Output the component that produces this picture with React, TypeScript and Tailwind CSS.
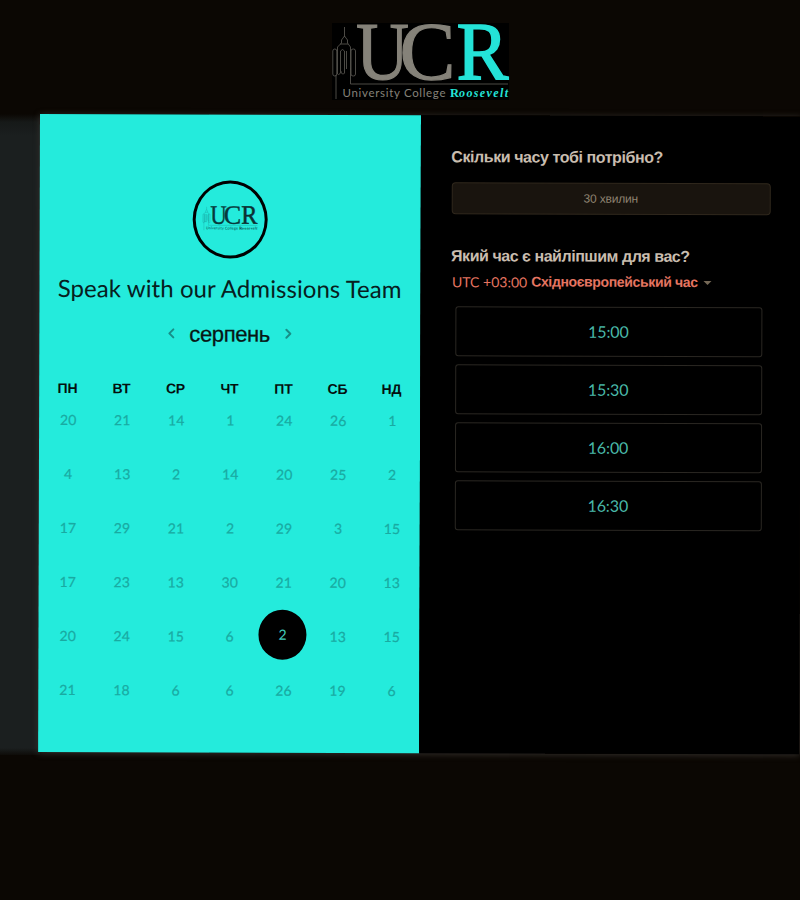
import { ChevronLeft, ChevronRight } from "lucide-react";

const weekdays = ["ПН", "ВТ", "СР", "ЧТ", "ПТ", "СБ", "НД"];
const weeks = [
  [20, 21, 14, 1, 24, 26, 1],
  [4, 13, 2, 14, 20, 25, 2],
  [17, 29, 21, 2, 29, 3, 15],
  [17, 23, 13, 30, 21, 20, 13],
  [20, 24, 15, 6, 2, 13, 15],
  [21, 18, 6, 6, 26, 19, 6],
];
const slots = ["15:00", "15:30", "16:00", "16:30"];

type LogoProps = { className: string; main: string; accent: string; line: string };

function Logo({ className, main, accent, line }: LogoProps) {
  return (
    <svg viewBox="0 0 177 77" preserveAspectRatio="none" className={className}>
      <g fill="none" stroke={line} strokeWidth="0.9">
        <path d="M12.5 4v10M12.5 13l-3 4v3l-4 4v4M12.5 13l3 4v3l3 4v23M8 21h8M4 76V52M18.5 45v16H176" />
        <rect x="0.8" y="26" width="4" height="27" rx="2" />
        <path d="M5.5 28v23q2 2 3.5-3M8.5 48V28q2-3 4 0v22q-2 3-4-2M14.5 28v18" />
        <rect x="19" y="26" width="4.5" height="27" rx="2" />
      </g>
      <g fontFamily="'Liberation Serif', serif" fontSize="82">
        <text x="24" y="56" fill={main} stroke={main} strokeWidth="1.2" textLength="53" lengthAdjust="spacingAndGlyphs">U</text>
        <text x="67.5" y="56" fill={main} stroke={main} strokeWidth="1.2" textLength="56" lengthAdjust="spacingAndGlyphs">C</text>
        <text x="124.5" y="56" fill={accent} stroke={accent} strokeWidth="1.5" textLength="52" lengthAdjust="spacingAndGlyphs">R</text>
      </g>
      <text x="10.5" y="73.5" fill={main} fontFamily="Lato, sans-serif" fontSize="11.5" textLength="103" lengthAdjust="spacing">University College</text>
      <text x="118" y="73.5" fill={accent} fontFamily="'Liberation Serif', serif" fontWeight="700" fontSize="12.5">R</text>
      <text x="127" y="73.5" fill={accent} fontFamily="'Liberation Serif', serif" fontStyle="italic" fontWeight="700" fontSize="12" textLength="49" lengthAdjust="spacing">oosevelt</text>
    </svg>
  );
}

function CalendarPanel() {
  return (
    <section className="flex w-[380.5px] shrink-0 flex-col items-center bg-[#24ebdc] pt-[65.5px]">
      <div className="flex h-[78px] w-[75px] items-center justify-center rounded-[50%] border-[3px] border-black">
        <Logo className="-mt-0.5 h-[25px] w-[55px] overflow-visible" main="#07393b" accent="#0b3032" line="#17898a" />
      </div>
      <h1 className="mt-3 h-9 whitespace-nowrap font-['Lato'] text-[24px] leading-9 tracking-[0.07px] text-[#07201e]">
        Speak with our Admissions Team
      </h1>
      <div className="mt-[11.5px] flex h-8 items-center font-['Liberation_Sans']">
        <ChevronLeft className="size-[16px] text-[#178f88]" strokeWidth={3} />
        <h2 className="w-[101px] text-center text-[22px] tracking-[-0.4px] text-[#071715] [-webkit-text-stroke:0.3px_#071715]">серпень</h2>
        <ChevronRight className="size-[16px] text-[#178f88]" strokeWidth={3} />
      </div>
      <div className="mt-7 grid w-[378px] grid-cols-7 font-['Liberation_Sans'] text-[14px] font-bold leading-[22px] tracking-[-0.2px] text-[#04100f]">
        {weekdays.map((day) => (
          <span key={day} className="text-center">{day}</span>
        ))}
      </div>
      <div className="-mt-[6.5px] grid w-[378px] grid-cols-7 font-['Lato'] text-[14px] tracking-[0.1px] text-[#19aaa2] [-webkit-text-stroke:0.2px_#19aaa2]">
        {weeks.flatMap((week, row) =>
          week.map((day, col) => (
            <div key={`${row}-${col}`} className="flex h-[54px] items-center justify-center">
              {row === 4 && col === 4 ? (
                <span className="-mt-[3px] flex h-[50px] w-[48px] shrink-0 items-center justify-center rounded-[50%] bg-black pb-0.5 text-[#42c9b8] [-webkit-text-stroke:0px]">{day}</span>
              ) : (
                <span className="pl-[2px]">{day}</span>
              )}
            </div>
          )),
        )}
      </div>
    </section>
  );
}

function TimePanel() {
  return (
    <section className="flex-1 bg-black pl-[31px] pt-[30px] font-['Liberation_Sans'] text-[#c9bdaf]">
      <h3 className="h-6 whitespace-nowrap text-[16px] font-bold leading-6 tracking-[-0.43px]">Скільки часу тобі потрібно?</h3>
      <div className="mt-[13px] flex h-8 w-[319px] items-center justify-center rounded-sm border border-[#30281d] bg-[#19140e] text-[12px] tracking-[-0.2px] text-[#8f8371]">
        30 хвилин
      </div>
      <h3 className="mt-[29.5px] h-6 whitespace-nowrap text-[16px] font-bold leading-6 tracking-[-0.46px]">Який час є найліпшим для вас?</h3>
      <div className="mt-[1.5px] flex h-6 items-center whitespace-nowrap text-[14px] text-[#e67561]">
        <span className="mr-1 pl-px font-['Lato'] tracking-[0px]">UTC +03:00</span>
        <span className="font-bold tracking-[-0.35px]">Східноєвропейський час</span>
        <span className="ml-1.5 mt-0.5 border-x-4 border-t-4 border-x-transparent border-t-[#756856]" />
      </div>
      <div className="ml-1 mt-[13px] flex w-[307px] flex-col gap-2">
        {slots.map((slot) => (
          <button key={slot} className="h-[50px] rounded-[3px] border border-[#2a2722] font-['Lato'] text-[16px] tracking-[-0.1px] text-[#49b9a9]">
            {slot}
          </button>
        ))}
      </div>
    </section>
  );
}

export default function App() {
  return (
    <div className="h-[900px] w-[800px] overflow-hidden bg-[#0b0703]">
      <header className="flex h-[114px] justify-center pl-[41px] pt-[23px]">
        <Logo className="h-[77px] w-[177px] overflow-visible bg-black" main="#858279" accent="#24e3d8" line="#55524d" />
      </header>
      <div className="flex h-[638px] w-[840px]">
        <div className="h-[641px] w-10 shrink-0 bg-[linear-gradient(to_bottom,#0b0703_0,#161918_8px,#1b1f1f_22px,#1b1f1f_634px,#0e0c09_641px)]" />
        <main className="flex h-[638px] w-[760.5px] origin-top-left rotate-[0.17deg] shadow-[0_1px_6px_#35312d]">
          <CalendarPanel />
          <TimePanel />
        </main>
      </div>
    </div>
  );
}
